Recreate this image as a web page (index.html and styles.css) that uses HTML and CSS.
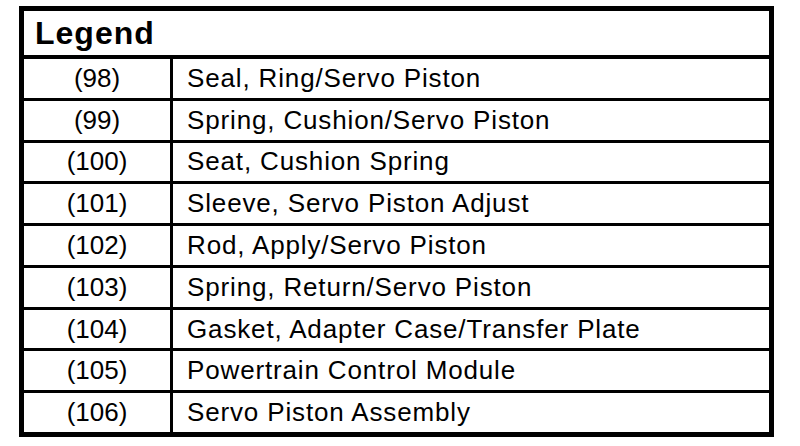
FILE: index.html
```html
<!DOCTYPE html>
<html>
<head>
<meta charset="utf-8">
<link rel="stylesheet" href="styles.css">
</head>
<body>
<div class="legend">
  <div class="head">Legend</div>
  <div class="rows">
    <div class="row"><div class="num">(98)</div><div class="desc">Seal, Ring/Servo Piston</div></div>
    <div class="row"><div class="num">(99)</div><div class="desc">Spring, Cushion/Servo Piston</div></div>
    <div class="row"><div class="num">(100)</div><div class="desc">Seat, Cushion Spring</div></div>
    <div class="row"><div class="num">(101)</div><div class="desc">Sleeve, Servo Piston Adjust</div></div>
    <div class="row"><div class="num">(102)</div><div class="desc">Rod, Apply/Servo Piston</div></div>
    <div class="row"><div class="num">(103)</div><div class="desc">Spring, Return/Servo Piston</div></div>
    <div class="row"><div class="num">(104)</div><div class="desc">Gasket, Adapter Case/Transfer Plate</div></div>
    <div class="row"><div class="num">(105)</div><div class="desc">Powertrain Control Module</div></div>
    <div class="row"><div class="num">(106)</div><div class="desc">Servo Piston Assembly</div></div>
  </div>
</div>
</body>
</html>
```
FILE: styles.css
```css
html, body {
  margin: 0;
  padding: 0;
  background: #fff;
}
body {
  width: 800px;
  height: 446px;
  overflow: hidden;
  font-family: "Liberation Sans", Arial, sans-serif;
  color: #000;
}
.legend {
  box-sizing: border-box;
  margin: 6px 0 0 19px;
  width: 755px;
  height: 431px;
  border: 5px solid #000;
  display: flex;
  flex-direction: column;
}
.head {
  box-sizing: border-box;
  height: 48px;
  border-bottom: 4px solid #000;
  font-weight: bold;
  font-size: 32px;
  line-height: 44px;
  padding-left: 11px;
  letter-spacing: 1px;
}
.rows {
  flex: 1;
  display: flex;
  flex-direction: column;
}
.row {
  flex: 1;
  display: flex;
  align-items: center;
  border-bottom: 3px solid #000;
  font-size: 26px;
}
.row:last-child {
  border-bottom: none;
}
.num {
  box-sizing: border-box;
  width: 149px;
  align-self: stretch;
  display: flex;
  align-items: center;
  justify-content: center;
  border-right: 3px solid #000;
}
.desc {
  padding-left: 14px;
  letter-spacing: 0.85px;
}
```
